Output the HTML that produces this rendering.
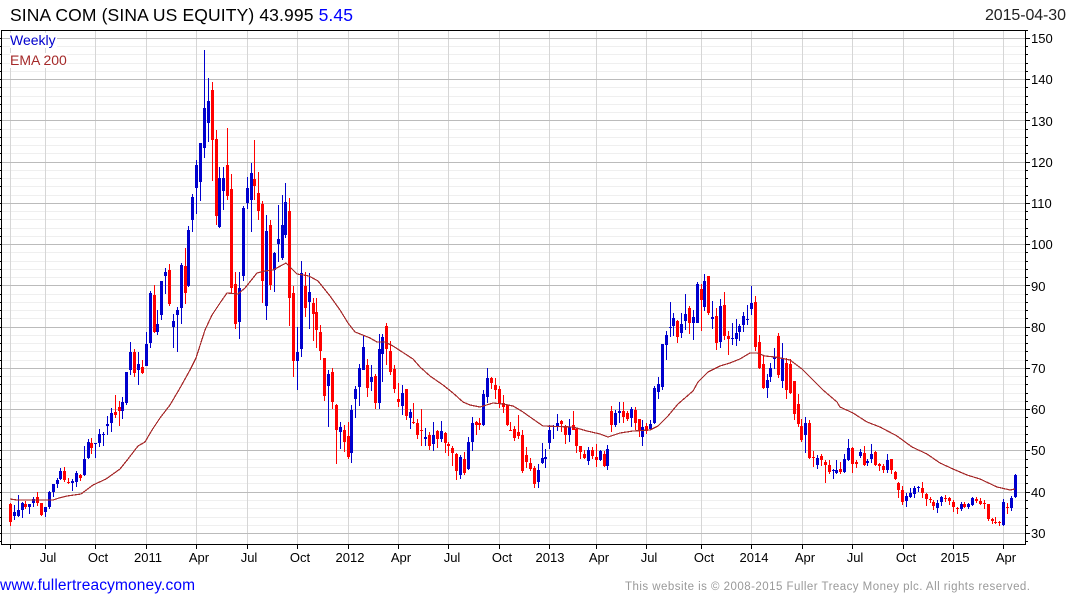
<!DOCTYPE html>
<html><head><meta charset="utf-8"><style>
html,body{margin:0;padding:0;background:#fff;width:1075px;height:600px;overflow:hidden}
svg{display:block;position:absolute;left:0;top:0}
text{font-family:"Liberation Sans",Arial,sans-serif}
</style></head><body>
<svg id="s" width="1075" height="600" viewBox="0 0 1075 600" xmlns="http://www.w3.org/2000/svg">
<g id="grid" shape-rendering="crispEdges"></g>
<rect x="10" y="33" width="47" height="15" fill="#fff"/>
<rect x="10" y="53" width="57" height="15" fill="#fff"/>
<g id="candles" shape-rendering="crispEdges"></g>
<polyline fill="none" stroke="#a52a2a" stroke-width="1.2" shape-rendering="crispEdges" points="10,499 17,500 53,500 59,498 67,496 81,494 93,485 106,479 120,469 128,459 138,446 145,442 152,430 160,418 170,405 180,388 190,370 196,358 205,330 212,315 220,303 227,293 238,294 245,288 257,273 265,271 273,270 286,263 290,267 297,274 309,276 318,281 330,296 340,310 348,323 355,332 370,338 377,342 385,342 393,346 413,359 420,367 430,376 443,385 453,393 463,402 470,405 480,407 493,403 503,404 513,406 523,412 530,417 543,426 573,427 587,431 600,434 608,437 620,433 633,431 650,430 658,426 668,416 678,404 693,391 698,382 708,372 720,366 730,363 740,359 750,353 757,353 765,356 775,357 790,360 802,369 813,380 823,390 837,402 840,407 853,413 867,422 880,427 897,436 912,447 927,454 940,463 953,469 967,475 980,479 997,487 1010,490 1015,489"/>
<g id="axes" shape-rendering="crispEdges"></g>
<text x="10" y="21" font-size="17.5" fill="#000" textLength="343" lengthAdjust="spacing">SINA COM (SINA US EQUITY) 43.995 <tspan fill="#0000ff">5.45</tspan></text>
<text x="985" y="20" font-size="16" fill="#222" textLength="81" lengthAdjust="spacing">2015-04-30</text>
<text x="10" y="45" font-size="14" fill="#0000cd">Weekly</text>
<text x="10" y="65" font-size="14" fill="#a52a2a">EMA 200</text>
<g font-size="13" fill="#000">
<text x="1031" y="43">150</text><text x="1031" y="84">140</text><text x="1031" y="126">130</text><text x="1031" y="167">120</text><text x="1031" y="208">110</text><text x="1031" y="249">100</text><text x="1031" y="291">90</text><text x="1031" y="332">80</text><text x="1031" y="373">70</text><text x="1031" y="414">60</text><text x="1031" y="455">50</text><text x="1031" y="497">40</text><text x="1031" y="538">30</text>
</g>
<g font-size="13" fill="#000" text-anchor="middle">
<text x="48" y="562">Jul</text><text x="98" y="562">Oct</text><text x="148" y="562">2011</text><text x="199" y="562">Apr</text><text x="249" y="562">Jul</text><text x="300" y="562">Oct</text><text x="350" y="562">2012</text><text x="401" y="562">Apr</text><text x="452" y="562">Jul</text><text x="502" y="562">Oct</text><text x="550" y="562">2013</text><text x="599" y="562">Apr</text><text x="649" y="562">Jul</text><text x="704" y="562">Oct</text><text x="754" y="562">2014</text><text x="805" y="562">Apr</text><text x="855" y="562">Jul</text><text x="906" y="562">Oct</text><text x="955" y="562">2015</text><text x="1006" y="562">Apr</text>
</g>
<text x="0" y="590" font-size="15.5" fill="#0000ff" textLength="195" lengthAdjust="spacing">www.fullertreacymoney.com</text>
<text x="625" y="590" font-size="11.5" fill="#999" textLength="405" lengthAdjust="spacing">This website is © 2008-2015 Fuller Treacy Money plc. All rights reserved.</text>
</svg>
<script>
var D="r503,504,522,526 b505,512,516,520 b495,510,516,517 b502,503,510,518 r501,504,507,509 b504,504,507,514 b497,499,503,507 r492,497,503,506 r503,503,515,516 b507,507,512,517 b491,492,507,509 b484,484,492,497 b478,480,484,488 b468,471,479,480 r467,471,480,482 r478,482,483,484 b479,481,483,491 b471,473,482,487 r474,475,478,481 b446,459,475,476 b439,442,458,459 r438,443,448,454 b443,443,444,458 b429,434,443,447 b432,434,435,446 b416,424,426,435 b408,413,423,432 r395,412,415,418 r401,407,411,426 b397,402,411,419 b372,372,403,405 b342,352,370,375 r349,352,373,377 b352,364,370,385 r360,367,373,374 b332,344,366,366 b291,293,343,348 r285,295,332,333 b310,324,332,335 b281,281,315,320 b268,272,276,294 r264,270,304,306 b314,321,327,348 b307,310,315,352 b263,265,308,324 r248,266,293,304 b226,230,286,287 b194,197,220,232 b160,165,188,214 b143,143,182,201 b50,108,148,158 b78,101,123,142 r82,90,140,181 r130,139,216,225 b167,178,227,228 b167,178,191,210 r128,165,196,200 r174,189,288,294 r272,284,324,329 b272,288,322,339 b206,208,276,281 b177,188,203,209 b163,173,200,232 r140,179,186,200 r172,193,211,220 r201,204,281,303 b215,231,306,320 r220,225,285,290 b252,253,270,292 b205,239,244,262 b195,225,258,260 b183,202,235,238 r198,211,298,326 r286,293,361,377 b327,352,361,390 b261,273,349,357 r272,286,308,317 b273,292,302,329 r298,303,314,341 r298,312,330,348 r325,332,351,360 r358,358,396,401 b370,374,386,427 r368,372,402,409 r404,405,430,464 b422,427,432,449 r425,430,442,452 r422,436,457,459 b405,410,453,463 b386,389,399,418 b364,368,387,406 b336,347,370,370 r359,365,388,397 b365,377,382,391 r374,376,403,409 b334,349,403,409 b334,337,354,382 r323,326,349,365 r341,351,372,375 r365,369,389,393 r383,399,402,407 b385,393,406,415 r389,389,416,420 b409,412,418,429 r403,422,423,424 r419,423,435,439 r409,430,431,446 b428,437,439,446 r432,435,446,450 b422,435,444,451 r430,431,439,448 b421,431,439,442 r432,433,443,453 r442,444,446,456 r446,448,453,466 r453,454,471,480 b455,457,475,479 r452,459,473,475 b437,442,469,470 b417,423,442,451 r421,422,425,435 r418,423,425,430 b390,394,425,426 b368,378,397,403 r377,378,383,389 r378,385,390,399 r386,389,403,408 r395,403,407,413 r405,405,425,426 r422,430,431,431 r426,429,438,441 r415,432,436,439 r430,435,471,473 r447,455,462,468 r458,463,469,471 r466,468,484,488 b464,470,482,488 b443,458,463,464 b449,457,459,468 b425,430,443,449 b425,426,427,439 b414,423,427,431 r420,421,424,432 r425,426,435,444 b419,427,435,442 r411,425,430,430 r428,429,446,453 r446,446,452,459 r450,454,458,459 b447,450,461,465 r447,450,456,459 r444,457,460,467 b450,451,460,461 r451,454,466,467 b445,449,466,470 r406,411,425,432 b410,413,425,427 b402,411,413,423 r402,411,417,423 r411,413,419,421 b407,409,418,427 r407,410,423,430 r419,419,431,437 b420,427,437,446 r423,426,431,434 b420,424,429,430 b386,388,423,424 b377,384,392,399 b344,344,387,390 b331,335,345,360 b302,327,328,337 b313,318,326,336 r320,321,337,343 b313,324,333,338 b294,314,321,330 r306,308,323,334 b310,317,323,340 b282,284,323,323 r284,289,300,331 b274,281,307,311 r276,276,313,315 b301,317,319,329 r308,316,343,350 b299,306,342,348 r292,305,336,340 r331,336,339,355 b323,338,339,345 b319,333,339,346 b324,326,332,341 b312,316,325,332 b305,319,320,325 b286,303,309,315 r296,302,347,351 r335,342,368,369 r356,364,388,389 b374,380,388,398 b363,368,377,382 b348,357,359,369 r333,336,375,378 b343,358,381,388 r358,363,390,399 r359,364,393,394 r381,381,414,420 r394,404,424,427 r419,426,440,442 b417,423,435,453 r420,423,458,459 r451,457,458,467 b455,458,465,469 r454,456,460,466 r460,462,465,483 r460,465,472,474 b469,470,471,479 b460,470,473,474 r462,469,472,474 b454,459,472,473 b439,448,460,461 r447,448,464,473 r460,462,464,468 b449,452,456,458 r446,453,465,466 b459,461,463,466 b444,454,459,463 r451,452,465,466 r463,464,466,471 r464,466,470,473 b454,460,470,473 r459,459,470,474 r471,472,479,480 r482,483,490,498 r486,490,502,505 b493,496,501,507 b488,493,497,498 b486,488,494,498 b486,487,488,492 r482,488,493,498 r493,494,499,506 r497,499,500,503 r500,502,506,510 b500,503,508,513 b496,497,502,506 r495,498,499,502 r497,498,501,505 r500,502,507,512 r507,508,509,514 b502,504,509,511 r502,504,507,508 b503,504,507,509 b497,498,505,506 r497,499,501,503 r498,501,504,505 r500,503,504,509 r504,504,519,521 r518,519,521,524 r517,522,523,524 r521,522,523,526 b499,502,525,526 r503,507,508,514 b496,498,508,511 b474,475,497,498".split(" ");
function R(x,y,w,h,f){return '<rect x="'+x+'" y="'+y+'" width="'+w+'" height="'+h+'" fill="'+f+'"/>'}
var g='',a='',c='',v,y;
var VX=[10,45,95,146,196,247,297,348,398,448,499,549,596,646,701,751,802,852,903,953,1003];
for(v=30;v<=150;v+=2){y=Math.round(533.3-(v-30)*4.125-0.3);
 if(v%10)g+=R(2,y,1023,1,'#efefef');}
VX.forEach(function(x){g+=R(x,31,1,513,'#d6d6d6');a+=R(x,545,1,4,'#000')});
for(v=30;v<=150;v+=2){y=Math.round(533.3-(v-30)*4.125-0.3);
 if(v%10==0)g+=R(2,y,1023,1,'#bbbbbb');
 a+=R(1026,y,v%10?2:4,1,'#000');a+=R(0,y,1,1,'#000');}
a+=R(1026,541,2,1,'#000')+R(0,541,1,1,'#000')+R(1026,30,2,1,'#000');
a+=R(1,30,1025,1,'#000')+R(1,544,1025,1,'#000')+R(1,30,1,515,'#000')+R(1025,30,1,515,'#000');
D.forEach(function(s,i){var col=s[0]=='b'?'#0000cd':'#ff0000',n=s.slice(1).split(',').map(Number),x=Math.round(9.97+3.88*i);
 c+=R(x,n[0],1,Math.max(1,n[3]-n[0]),col);c+=R(x-1,n[1],3,Math.max(1,n[2]-n[1]),col);});
document.getElementById('grid').innerHTML=g;
document.getElementById('axes').innerHTML=a;
document.getElementById('candles').innerHTML=c;
</script>
</body></html>
